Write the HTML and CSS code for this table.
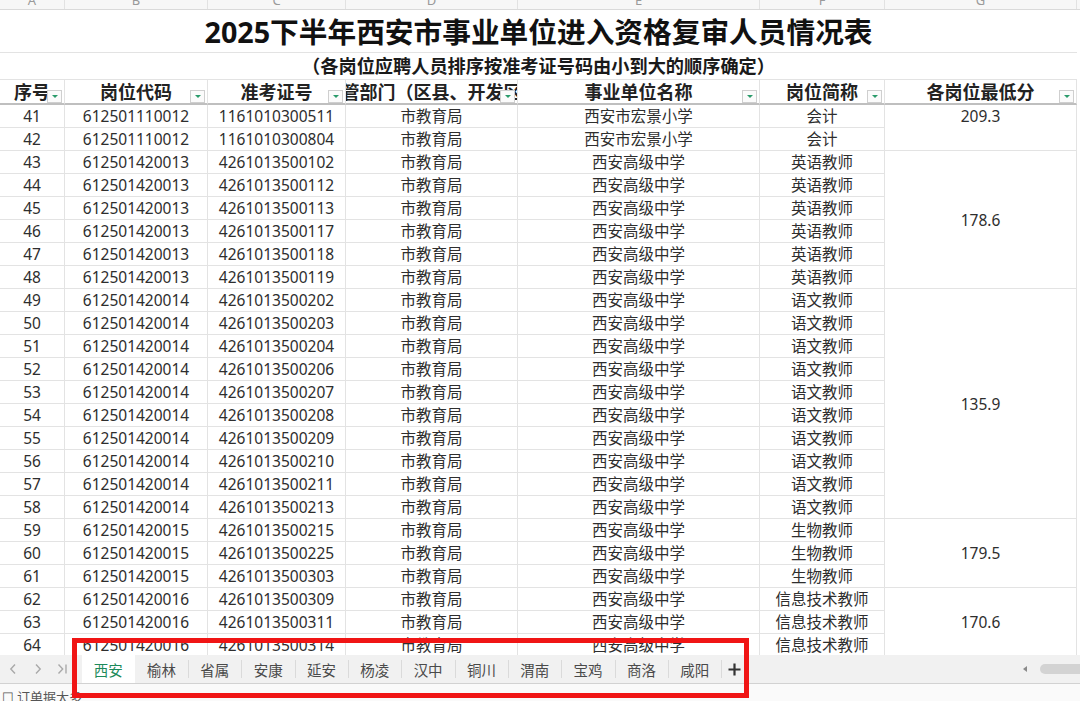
FILE: index.html
```html
<!DOCTYPE html>
<html lang="zh-CN">
<head>
<meta charset="utf-8">
<title>2025下半年西安市事业单位进入资格复审人员情况表</title>
<link rel="stylesheet" href="styles.css">
</head>
<body>
<div class="app">
  <div class="colbar">
    <div class="cc w1">A</div><div class="cc w2">B</div><div class="cc w3">C</div><div class="cc w4">D</div><div class="cc w5">E</div><div class="cc w6">F</div><div class="cc w7">G</div>
  </div>
  <div class="sheet">
    <table class="grid">
      <colgroup><col class="w1"><col class="w2"><col class="w3"><col class="w4"><col class="w5"><col class="w6"><col class="w7"></colgroup>
      <tr class="r-title"><td colspan="7">2025下半年西安市事业单位进入资格复审人员情况表</td></tr>
      <tr class="r-sub"><td colspan="7">（各岗位应聘人员排序按准考证号码由小到大的顺序确定）</td></tr>
      <tr class="r-head">
        <th><div class="hc">序号</div><i class="flt"></i></th>
        <th><div class="hc">岗位代码</div><i class="flt"></i></th>
        <th><div class="hc">准考证号</div><i class="flt"></i></th>
        <th><div class="hc">主管部门（区县、开发区）</div><i class="flt"></i></th>
        <th><div class="hc">事业单位名称</div><i class="flt"></i></th>
        <th><div class="hc">岗位简称</div><i class="flt"></i></th>
        <th><div class="hc">各岗位最低分</div><i class="flt"></i></th>
      </tr>
      <tr><td>41</td><td>612501110012</td><td>1161010300511</td><td>市教育局</td><td>西安市宏景小学</td><td>会计</td><td rowspan="2" class="top">209.3</td></tr>
      <tr><td>42</td><td>612501110012</td><td>1161010300804</td><td>市教育局</td><td>西安市宏景小学</td><td>会计</td></tr>
      <tr><td>43</td><td>612501420013</td><td>4261013500102</td><td>市教育局</td><td>西安高级中学</td><td>英语教师</td><td rowspan="6">178.6</td></tr>
      <tr><td>44</td><td>612501420013</td><td>4261013500112</td><td>市教育局</td><td>西安高级中学</td><td>英语教师</td></tr>
      <tr><td>45</td><td>612501420013</td><td>4261013500113</td><td>市教育局</td><td>西安高级中学</td><td>英语教师</td></tr>
      <tr><td>46</td><td>612501420013</td><td>4261013500117</td><td>市教育局</td><td>西安高级中学</td><td>英语教师</td></tr>
      <tr><td>47</td><td>612501420013</td><td>4261013500118</td><td>市教育局</td><td>西安高级中学</td><td>英语教师</td></tr>
      <tr><td>48</td><td>612501420013</td><td>4261013500119</td><td>市教育局</td><td>西安高级中学</td><td>英语教师</td></tr>
      <tr><td>49</td><td>612501420014</td><td>4261013500202</td><td>市教育局</td><td>西安高级中学</td><td>语文教师</td><td rowspan="10">135.9</td></tr>
      <tr><td>50</td><td>612501420014</td><td>4261013500203</td><td>市教育局</td><td>西安高级中学</td><td>语文教师</td></tr>
      <tr><td>51</td><td>612501420014</td><td>4261013500204</td><td>市教育局</td><td>西安高级中学</td><td>语文教师</td></tr>
      <tr><td>52</td><td>612501420014</td><td>4261013500206</td><td>市教育局</td><td>西安高级中学</td><td>语文教师</td></tr>
      <tr><td>53</td><td>612501420014</td><td>4261013500207</td><td>市教育局</td><td>西安高级中学</td><td>语文教师</td></tr>
      <tr><td>54</td><td>612501420014</td><td>4261013500208</td><td>市教育局</td><td>西安高级中学</td><td>语文教师</td></tr>
      <tr><td>55</td><td>612501420014</td><td>4261013500209</td><td>市教育局</td><td>西安高级中学</td><td>语文教师</td></tr>
      <tr><td>56</td><td>612501420014</td><td>4261013500210</td><td>市教育局</td><td>西安高级中学</td><td>语文教师</td></tr>
      <tr><td>57</td><td>612501420014</td><td>4261013500211</td><td>市教育局</td><td>西安高级中学</td><td>语文教师</td></tr>
      <tr><td>58</td><td>612501420014</td><td>4261013500213</td><td>市教育局</td><td>西安高级中学</td><td>语文教师</td></tr>
      <tr><td>59</td><td>612501420015</td><td>4261013500215</td><td>市教育局</td><td>西安高级中学</td><td>生物教师</td><td rowspan="3">179.5</td></tr>
      <tr><td>60</td><td>612501420015</td><td>4261013500225</td><td>市教育局</td><td>西安高级中学</td><td>生物教师</td></tr>
      <tr><td>61</td><td>612501420015</td><td>4261013500303</td><td>市教育局</td><td>西安高级中学</td><td>生物教师</td></tr>
      <tr><td>62</td><td>612501420016</td><td>4261013500309</td><td>市教育局</td><td>西安高级中学</td><td>信息技术教师</td><td rowspan="3">170.6</td></tr>
      <tr><td>63</td><td>612501420016</td><td>4261013500311</td><td>市教育局</td><td>西安高级中学</td><td>信息技术教师</td></tr>
      <tr><td>64</td><td>612501420016</td><td>4261013500314</td><td>市教育局</td><td>西安高级中学</td><td>信息技术教师</td></tr>
    </table>
  </div>
  <div class="tabbar">
    <div class="nav">
      <span class="nb"><svg width="8" height="12" viewBox="0 0 8 12"><path d="M6 1.5 1.8 6 6 10.5" fill="none" stroke="#a9a9a9" stroke-width="1.4"/></svg></span>
      <span class="nb"><svg width="8" height="12" viewBox="0 0 8 12"><path d="M2 1.5 6.2 6 2 10.5" fill="none" stroke="#a9a9a9" stroke-width="1.4"/></svg></span>
      <span class="nb"><svg width="11" height="12" viewBox="0 0 11 12"><path d="M1.5 1.5 5.7 6 1.5 10.5" fill="none" stroke="#a9a9a9" stroke-width="1.4"/><path d="M9 1.5V10.5" stroke="#a9a9a9" stroke-width="1.4"/></svg></span>
    </div>
    <div class="tabs">
      <span class="tab active">西安</span>
      <span class="tab">榆林</span>
      <span class="tab">省属</span>
      <span class="tab">安康</span>
      <span class="tab">延安</span>
      <span class="tab">杨凌</span>
      <span class="tab">汉中</span>
      <span class="tab">铜川</span>
      <span class="tab">渭南</span>
      <span class="tab">宝鸡</span>
      <span class="tab">商洛</span>
      <span class="tab">咸阳</span>
      <span class="add"><svg width="13" height="13" viewBox="0 0 13 13"><path d="M6.5 0.5V12.5M0.5 6.5H12.5" stroke="#333" stroke-width="2.2"/></svg></span>
    </div>
    <div class="hscroll">
      <span class="vbar"></span>
      <span class="tri"></span>
      <span class="thumb"></span>
    </div>
  </div>
  <div class="status"><span class="stext">☐ 订单据太多</span></div>
  <div class="redbox"></div>
</div>
</body>
</html>
```

FILE: styles.css
```css
* { box-sizing: border-box; }
html, body { margin: 0; padding: 0; background: #fff; }
body {
  font-family: "Noto Sans", "Noto Sans CJK SC", sans-serif;
  color: #333;
}
.app {
  position: relative;
  width: 1080px;
  height: 701px;
  overflow: hidden;
  display: flex;
  flex-direction: column;
}
.w1 { width: 65px; }
.w2 { width: 143px; }
.w3 { width: 138px; }
.w4 { width: 172px; }
.w5 { width: 242px; }
.w6 { width: 125px; }
.w7 { width: 192px; }

.colbar {
  flex: 0 0 10px;
  display: flex;
  background: #f7f7f7;
  border-bottom: 1px solid #dadada;
  overflow: hidden;
}
.cc {
  flex: none;
  height: 10px;
  overflow: hidden;
  text-align: center;
  font-size: 13px;
  line-height: 1px;
  color: #9a9a9a;
  border-right: 1px solid #e2e2e2;
}

.sheet {
  flex: 1 1 auto;
  overflow: hidden;
  min-height: 0;
}
.grid {
  table-layout: fixed;
  width: 1077px;
  border-collapse: separate;
  border-spacing: 0;
}
.grid td, .grid th {
  padding: 0;
  text-align: center;
  vertical-align: middle;
  white-space: nowrap;
  overflow: hidden;
  border-right: 1px solid #e3e3e3;
  border-bottom: 1px solid #e3e3e3;
}
.grid tr { height: 23px; }
.grid td {
  font-size: 15.5px;
  line-height: 20px;
  color: #2e2e2e;
}
.grid td.top { vertical-align: top; line-height: 22px; }

.r-title { height: 43px !important; }
.r-title td {
  font-size: 28.7px;
  font-weight: 700;
  color: #111;
  line-height: 36px;
  padding-top: 2px;
  border-right: none;
}
.r-sub { height: 27px !important; }
.r-sub td {
  font-size: 18.2px;
  font-weight: 700;
  color: #1a1a1a;
  line-height: 24px;
  border-right: none;
}
.r-head { height: 25px !important; }
.r-head th {
  position: relative;
  font-size: 18px;
  font-weight: 700;
  color: #222;
  line-height: 22px;
  border-bottom: 2px solid #bfbfbf;
}
.hc {
  display: flex;
  justify-content: center;
  overflow: hidden;
  white-space: nowrap;
}
.flt {
  position: absolute;
  right: 2px;
  bottom: 0;
  width: 15px;
  height: 13px;
  background: #fbfbfb;
  border: 1px solid #cfcfcf;
}
.flt::after {
  content: "";
  position: absolute;
  left: 4px;
  top: 4px;
  border-left: 3px solid transparent;
  border-right: 3px solid transparent;
  border-top: 3px solid #2a9b6b;
}

.tabbar {
  flex: 0 0 28px;
  display: flex;
  align-items: stretch;
  background: #f1f1f1;
  overflow: hidden;
}
.nav {
  flex: 0 0 81.5px;
  display: flex;
  align-items: center;
}
.nb {
  width: 25px;
  display: flex;
  justify-content: center;
  align-items: center;
}
.tabs {
  display: flex;
  align-items: stretch;
}
.tab {
  width: 53.33px;
  display: flex;
  align-items: center;
  justify-content: center;
  font-family: "Noto Sans CJK SC", sans-serif;
  font-size: 14.5px;
  color: #4a4a4a;
  background-image: linear-gradient(#dadada, #dadada);
  background-size: 1px 18px;
  background-position: left center;
  background-repeat: no-repeat;
}
.tab.active {
  background: #fff;
  color: #1d8a5b;
}
.tab.active + .tab { background-image: none; }
.add {
  width: 27px;
  display: flex;
  align-items: center;
  justify-content: center;
  background-image: linear-gradient(#dadada, #dadada);
  background-size: 1px 18px;
  background-position: left center;
  background-repeat: no-repeat;
}
.hscroll {
  margin-left: auto;
  width: 80px;
  display: flex;
  align-items: center;
  padding-left: 5px;
  flex: none;
}
.vbar {
  width: 1px;
  height: 10px;
  background: #b9b9b9;
}
.tri {
  margin-left: 18px;
  width: 0;
  height: 0;
  border-top: 3px solid transparent;
  border-bottom: 3px solid transparent;
  border-right: 4px solid #8a8a8a;
}
.thumb {
  margin-left: 13px;
  flex: none;
  width: 50px;
  height: 10px;
  border-radius: 5px;
  background: #d3d3d3;
}

.status {
  flex: 0 0 18px;
  border-top: 1px solid #d2d2d2;
  background: #fafafa;
  overflow: hidden;
}
.stext {
  display: block;
  font-family: "Noto Sans CJK SC", sans-serif;
  font-size: 13px;
  line-height: 26px;
  color: #555;
  padding-left: 2px;
}

.redbox {
  position: absolute;
  left: 72px;
  top: 638px;
  width: 677px;
  height: 60px;
  border: 5px solid #f01515;
}
```
